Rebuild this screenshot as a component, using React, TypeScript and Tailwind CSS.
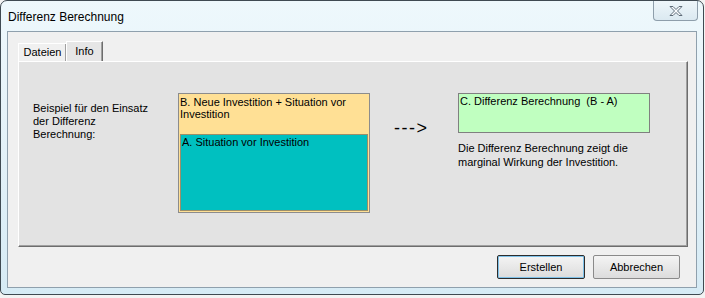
const ui = { fontFamily: '"Liberation Sans", Arial, sans-serif' };

function CloseGlyph() {
  return (
    <svg width="16" height="12" viewBox="0 0 16 12">
      <path
        d="M2 1.5h3l3 3 3-3h3l-4.5 4.5 4.5 4.5h-3l-3-3-3 3h-3l4.5-4.5z"
        fill="#fbfdff"
        stroke="#5d6b78"
        strokeWidth="1"
        strokeLinejoin="round"
      />
    </svg>
  );
}

function Tabs() {
  return (
    <div className="flex items-end h-[20px]">
      <div className="h-[18px] w-[48px] bg-[#f0f0f0] border-t border-l border-white shadow-[inset_-1px_0_0_#a0a0a0] flex items-center justify-center text-[11px] text-black">
        Dateien
      </div>
      <div className="h-[20px] w-[37px] bg-[#e6e6e6] border-t border-l border-white border-r border-r-[#6d6d6d] shadow-[inset_-1px_0_0_#a0a0a0] flex items-start justify-center pt-[1px] text-[11px] text-black">
        Info
      </div>
    </div>
  );
}

function Panel() {
  return (
    <div className="w-[670px] h-[186px] bg-[#e3e3e3] border-t border-l border-white border-r border-b border-r-[#6d6d6d] border-b-[#6d6d6d] shadow-[inset_-1px_-1px_0_#a0a0a0] flex items-start pt-[31px] pl-[14px] text-[11px] leading-[13px] text-black">
      <div className="w-[145px] mt-[9px]">
        Beispiel für den Einsatz
        <br />
        der Differenz
        <br />
        Berechnung:
      </div>

      <div className="w-[192px] h-[120px] bg-[#ffe095] border border-[#8c8c8c] flex flex-col px-[1px] pb-[1px]">
        <div className="leading-[12px] pt-[2px]">
          B. Neue Investition + Situation vor
          <br />
          Investition
        </div>
        <div className="mt-auto h-[77px] bg-[#00c0c0] border border-[#9c8f6a] pl-[1px] pt-[1px]">
          A. Situation vor Investition
        </div>
      </div>

      <div className="w-[88px] pl-[24px] mt-[25px] text-[18px] leading-[20px] tracking-[1.5px]">
        ---&gt;
      </div>

      <div className="w-[192px] flex flex-col">
        <div className="h-[40px] bg-[#c0ffc0] border border-[#808080] pl-[1px] pt-[1px] whitespace-pre">
          C. Differenz Berechnung  (B - A)
        </div>
        <div className="mt-[8px] leading-[14px]">
          Die Differenz Berechnung zeigt die
          <br />
          marginal Wirkung der Investition.
        </div>
      </div>
    </div>
  );
}

export default function App() {
  return (
    <div className="w-[705px] h-[298px] bg-[#f3f3f3] overflow-hidden" style={ui}>
      <div className="w-[704px] h-[295px] border border-[#3f4a52] rounded-t-[7px] rounded-b-[5px] bg-gradient-to-b from-[#eef8fc] via-[#e3f1f8] to-[#d6ebf5] flex flex-col">
        <div className="h-[30px] flex items-start justify-between">
          <div className="pl-[7px] pt-[8px] text-[12px] leading-[16px] text-black">Differenz Berechnung</div>
          <div className="mr-[5px] w-[45px] h-[20px] border border-t-0 border-[#8e9eab] rounded-b-[4px] bg-gradient-to-b from-[#eef6fa] to-[#dbe9f1] flex items-center justify-center">
            <CloseGlyph />
          </div>
        </div>

        <div className="ml-[6px] w-[690px] h-[257px] border border-[#8fa0ad] bg-[#f0f0f0] flex flex-col pl-[10px] pt-[9px]">
          <Tabs />
          <Panel />
          <div className="flex justify-end gap-[8px] pr-[16px] mt-[8px]">
            <button className="w-[88px] h-[24px] border border-[#2c2c2c] rounded-[2px] bg-gradient-to-b from-[#f4f4f4] to-[#dcdcdc] shadow-[inset_0_0_0_1px_#7fc1e8] text-[11px] text-black">
              Erstellen
            </button>
            <button className="w-[87px] h-[24px] border border-[#8a8a8a] rounded-[2px] bg-gradient-to-b from-[#f4f4f4] to-[#dcdcdc] text-[11px] text-black">
              Abbrechen
            </button>
          </div>
        </div>
      </div>
    </div>
  );
}
